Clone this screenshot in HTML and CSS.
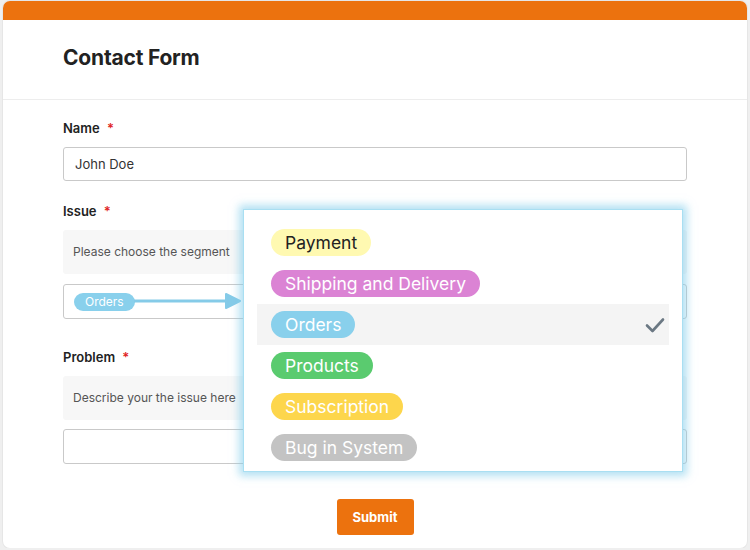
FILE: index.html
```html
<!DOCTYPE html>
<html lang="en">

<head>
    <meta charset="UTF-8">
    <meta name="viewport" content="width=device-width, initial-scale=1.0">
    <title>Contact Form</title>
    <link rel="stylesheet" href="styles.css">
</head>

<body>
    <div class="card">
        <div class="topbar"></div>
        <div class="header">
            <h1>Contact Form</h1>
        </div>

        <form class="form" onsubmit="return false;">
            <div class="field field-name">
                <label class="label">Name <span class="req">*</span></label>
                <input type="text" class="input" value="John Doe">
            </div>

            <div class="field field-issue">
                <label class="label">Issue <span class="req">*</span></label>
                <div class="hint">Please choose the segment</div>
                <div class="select">
                    <span class="tag tag-small orders">Orders</span>
                </div>
            </div>

            <div class="field field-problem">
                <label class="label">Problem <span class="req">*</span></label>
                <div class="hint">Describe your the issue here</div>
                <input type="text" class="input input-tall">
            </div>

            <div class="actions">
                <button type="submit" class="submit">Submit</button>
            </div>
        </form>

        <!-- pointer from the selected tag to the open menu -->
        <div class="pointer">
            <svg width="110" height="16" viewBox="0 0 110 16">
                <line x1="0" y1="8" x2="94" y2="8" stroke="#85cbe8" stroke-width="3" stroke-linecap="round" />
                <path d="M92 1 L106 8 L92 15 Z" fill="#85cbe8" stroke="#85cbe8" stroke-width="2" stroke-linejoin="round" />
            </svg>
        </div>

        <div class="menu">
            <div class="option"><span class="tag payment">Payment</span></div>
            <div class="option"><span class="tag shipping">Shipping and Delivery</span></div>
            <div class="option active">
                <span class="tag orders">Orders</span>
                <svg class="check" width="20" height="16" viewBox="0 0 20 16">
                    <path d="M2 8.5 L7.5 14 L18 2.5" fill="none" stroke="#6b7883" stroke-width="2.6" stroke-linecap="round" stroke-linejoin="round" />
                </svg>
            </div>
            <div class="option"><span class="tag products">Products</span></div>
            <div class="option"><span class="tag subscription">Subscription</span></div>
            <div class="option"><span class="tag bug">Bug in System</span></div>
        </div>
    </div>
</body>

</html>
```

FILE: styles.css
```css
body {
    margin: 0;
    background: #efefef;
    font-family: Inter, "Noto Sans", Arial, sans-serif;
    color: #222;
}

.card {
    position: relative;
    margin: 1px 3px 0 3px;
    height: 547px;
    background: white;
    border-radius: 7px;
    overflow: hidden;
    box-shadow: 0 0 0 1px #e6e6e6;
}

.topbar {
    height: 19px;
    background: #ec720e;
}

.header {
    height: 79px;
    padding: 0 60px;
    display: flex;
    align-items: center;
    border-bottom: 1px solid #ededed;
}

.header h1 {
    margin: 0 0 4px 0;
    font-size: 21px;
    font-weight: 700;
    color: #222;
    letter-spacing: -0.2px;
}

.form {
    padding: 20px 60px 0 60px;
}

.field {
    margin-bottom: 22px;
}

.field-issue {
    margin-bottom: 30px;
}

.label {
    display: block;
    height: 16px;
    line-height: 16px;
    font-size: 13px;
    font-weight: 600;
    color: #222;
    margin-bottom: 11px;
}

.req {
    color: #e02424;
    margin-left: 4px;
}

.input {
    display: block;
    box-sizing: border-box;
    width: 100%;
    height: 34px;
    padding: 0 11px;
    border: 1px solid #c9c9c9;
    border-radius: 3px;
    font-family: inherit;
    font-size: 13px;
    color: #333;
    background: white;
}

.input-tall {
    height: 35px;
}

.hint {
    height: 44px;
    line-height: 44px;
    padding: 0 10px;
    background: #f7f7f7;
    border-radius: 3px;
    font-size: 12px;
    color: #555;
    margin-bottom: 10px;
}

.field-problem .hint {
    margin-bottom: 9px;
}

.select {
    box-sizing: border-box;
    height: 35px;
    padding: 0 10px;
    border: 1px solid #c9c9c9;
    border-radius: 3px;
    display: flex;
    align-items: center;
}

.tag {
    display: inline-block;
    height: 27px;
    line-height: 27px;
    padding: 0 14px;
    border-radius: 14px;
    font-size: 17.5px;
    color: white;
}

.tag-small {
    height: 18px;
    line-height: 18px;
    padding: 0 11px;
    border-radius: 9px;
    font-size: 12px;
}

.payment {
    background: #fff9b1;
    color: #222;
}

.shipping {
    background: #db83d4;
}

.orders {
    background: #89d0ec;
}

.products {
    background: #5acb6f;
}

.subscription {
    background: #fdd64c;
}

.bug {
    background: #c3c3c3;
}

.actions {
    display: flex;
    justify-content: center;
    padding-top: 13px;
}

.submit {
    width: 77px;
    height: 36px;
    border: none;
    border-radius: 3px;
    background: #ec720e;
    color: white;
    font-family: inherit;
    font-size: 13px;
    font-weight: 700;
    cursor: pointer;
}

.pointer {
    position: absolute;
    left: 131px;
    top: 292px;
    line-height: 0;
}

.menu {
    position: absolute;
    left: 240px;
    top: 208px;
    width: 440px;
    box-sizing: border-box;
    padding: 12px 13px 3px 13px;
    background: white;
    border: 1px solid #a9dff2;
    box-shadow: 0 0 8px 4px rgba(130, 205, 235, 0.6);
}

.option {
    height: 41px;
    display: flex;
    align-items: center;
    justify-content: space-between;
    padding: 0 4px 0 14px;
}

.option.active {
    background: #f4f4f4;
}
```
